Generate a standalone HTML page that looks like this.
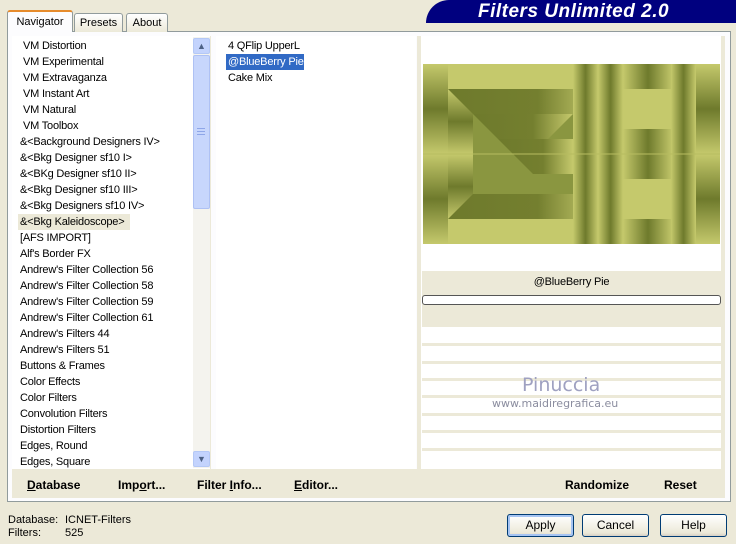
<!DOCTYPE html>
<html><head><style>
*{margin:0;padding:0;box-sizing:border-box}
body{width:736px;height:544px;background:#ece9d8;font-family:Tahoma,"Liberation Sans",sans-serif;font-size:11px;color:#000;position:relative;overflow:hidden}
.a{position:absolute}
.tab{position:absolute;border:1px solid #919b9c;border-bottom:none;background:linear-gradient(#fff,#ece9d8);text-align:center;border-radius:3px 3px 0 0}
.list div{height:16px;line-height:16px;white-space:nowrap;letter-spacing:-0.2px}
.b{font-weight:bold;font-size:12px;position:absolute;top:478px}
.btn{position:absolute;top:514px;height:23px;border:1px solid #003c74;border-radius:3px;background:linear-gradient(#fff,#ece9d8 85%,#d6d0c5);text-align:center;line-height:21px;font-size:12px}
.ln{position:absolute;left:422px;width:299px;height:3px;background:#ece9d8}
</style></head><body>
<div class="a" style="left:426px;top:0;width:310px;height:23px;background:#00007f;border-radius:40px 0 0 0"></div>
<div class="a" style="left:478px;top:1px;color:#fff;font:italic bold 19px 'Liberation Sans',sans-serif;letter-spacing:0.5px">Filters Unlimited 2.0</div>
<div class="a" style="left:7px;top:31px;width:724px;height:471px;border:1px solid #919b9c;background:#fcfcfe"></div>
<div class="tab" style="left:74px;top:13px;width:49px;height:19px;line-height:18px">Presets</div>
<div class="tab" style="left:126px;top:13px;width:42px;height:19px;line-height:18px">About</div>
<div class="tab" style="left:7px;top:10px;width:66px;height:22px;line-height:20px;background:#fcfcfe;border-top:2px solid #e68b2c">Navigator</div>
<div class="a" style="left:12px;top:36px;width:199px;height:433px;background:#fff;border-right:1px solid #ece9d8"></div>
<div class="a list" style="left:20px;top:38px">
<div style="padding-left:3px">VM Distortion</div><div style="padding-left:3px">VM Experimental</div><div style="padding-left:3px">VM Extravaganza</div><div style="padding-left:3px">VM Instant Art</div><div style="padding-left:3px">VM Natural</div><div style="padding-left:3px">VM Toolbox</div>
<div>&amp;&lt;Background Designers IV&gt;</div><div>&amp;&lt;Bkg Designer sf10 I&gt;</div><div>&amp;&lt;BKg Designer sf10 II&gt;</div><div>&amp;&lt;Bkg Designer sf10 III&gt;</div><div>&amp;&lt;Bkg Designers sf10 IV&gt;</div>
<div style="background:#ece9d8;margin-left:-2px;padding-left:2px;width:112px">&amp;&lt;Bkg Kaleidoscope&gt;</div>
<div>[AFS IMPORT]</div><div>Alf's Border FX</div><div>Andrew's Filter Collection 56</div><div>Andrew's Filter Collection 58</div><div>Andrew's Filter Collection 59</div><div>Andrew's Filter Collection 61</div><div>Andrew's Filters 44</div><div>Andrew's Filters 51</div><div>Buttons &amp; Frames</div><div>Color Effects</div><div>Color Filters</div><div>Convolution Filters</div><div>Distortion Filters</div><div>Edges, Round</div><div>Edges, Square</div>
</div>
<div class="a" style="left:193px;top:37px;width:17px;height:431px;background:#f4f3ee"></div>
<div class="a" style="left:193px;top:38px;width:17px;height:16px;background:#c3d3fd;border:1px solid #b4c8f6;border-radius:2px;text-align:center;font-size:9px;line-height:14px;color:#4d6185">&#9650;</div>
<div class="a" style="left:193px;top:55px;width:17px;height:154px;background:#c7d6fc;border:1px solid #aec1f4;border-radius:2px"></div>
<div class="a" style="left:197px;top:128px;width:8px;height:7px;border-top:1px solid #8ea6e8;border-bottom:1px solid #8ea6e8"><div style="margin-top:2px;border-top:1px solid #8ea6e8"></div></div>
<div class="a" style="left:193px;top:451px;width:17px;height:16px;background:#c3d3fd;border:1px solid #b4c8f6;border-radius:2px;text-align:center;font-size:9px;line-height:14px;color:#4d6185">&#9660;</div>
<div class="a" style="left:216px;top:36px;width:200px;height:433px;background:#fff"></div>
<div class="a list" style="left:226px;top:38px">
<div style="padding-left:2px">4 QFlip UpperL</div>
<div style="background:#316ac5;color:#fff;padding:0 2px;width:78px">@BlueBerry Pie</div>
<div style="padding-left:2px">Cake Mix</div>
</div>
<div class="a" style="left:417px;top:36px;width:4px;height:462px;background:#ece9d8"></div>
<div class="a" style="left:421px;top:36px;width:302px;height:433px;background:#fff"></div>
<div class="a" style="left:721px;top:36px;width:4px;height:462px;background:#ece9d8"></div>
<svg class="a" style="left:423px;top:64px" width="297" height="180" viewBox="0 0 297 180">
<defs>
<linearGradient id="v" x1="0" y1="0" x2="0" y2="1"><stop offset="0" stop-color="#c5c96c"/><stop offset=".5" stop-color="#6e7a2c"/><stop offset="1" stop-color="#c5c96c"/></linearGradient>
<linearGradient id="h" x1="0" y1="0" x2="1" y2="0"><stop offset="0" stop-color="#c5c96c"/><stop offset=".5" stop-color="#6e7a2c"/><stop offset="1" stop-color="#c5c96c"/></linearGradient>
<linearGradient id="hr" x1="0" y1="0" x2="1" y2="0"><stop offset="0" stop-color="#6e7a2c"/><stop offset=".6" stop-color="#747f2f"/><stop offset="1" stop-color="#c5c96c"/></linearGradient>
</defs>
<rect width="297" height="180" fill="#c5c96c"/>
<rect x="0" y="0" width="25" height="90" fill="url(#v)"/><rect x="0" y="90" width="25" height="90" fill="url(#v)"/>
<rect x="25" y="25" width="25" height="65" fill="url(#v)"/><rect x="25" y="90" width="25" height="65" fill="url(#v)"/>
<polygon points="25,25 175,25 150,50 50,50" fill="url(#hr)"/>
<polygon points="25,155 175,155 150,130 50,130" fill="url(#hr)"/>
<rect x="50" y="50" width="100" height="80" fill="#8a9640"/>
<polygon points="50,50 150,50 125,75 75,75" fill="url(#hr)"/>
<polygon points="75,75 150,75 150,110 110,110" fill="url(#hr)"/>
<rect x="150" y="0" width="25" height="180" fill="url(#h)"/>
<rect x="175" y="0" width="25" height="180" rx="3" fill="url(#h)"/>
<rect x="200" y="0" width="50" height="180" fill="url(#h)"/>
<rect x="200" y="25" width="48" height="40" fill="#c5c96c"/><rect x="200" y="115" width="48" height="40" fill="#c5c96c"/>
<rect x="248" y="0" width="25" height="180" fill="url(#h)"/>
<rect x="273" y="0" width="24" height="90" fill="url(#v)"/><rect x="273" y="90" width="24" height="90" fill="url(#v)"/>
<line x1="0" y1="90" x2="297" y2="90" stroke="#b7bc60" stroke-width="1"/>
</svg>
<div class="a" style="left:422px;top:271px;width:299px;height:56px;background:#ece9d8"></div>
<div class="a" style="left:422px;top:276px;width:299px;text-align:center;letter-spacing:-0.2px">@BlueBerry Pie</div>
<div class="a" style="left:422px;top:295px;width:299px;height:10px;background:#fff;border:1px solid #555;border-radius:3px"></div>
<div class="ln" style="top:343px"></div><div class="ln" style="top:361px"></div><div class="ln" style="top:378px"></div><div class="ln" style="top:395px"></div><div class="ln" style="top:413px"></div><div class="ln" style="top:430px"></div><div class="ln" style="top:448px"></div>
<div class="a" style="left:522px;top:374px;color:#9fa1c1;font:19px 'DejaVu Sans',sans-serif">Pinuccia</div>
<div class="a" style="left:492px;top:397px;color:#8b8d9f;font:11px 'DejaVu Sans',sans-serif">www.maidiregrafica.eu</div>
<div class="a" style="left:12px;top:469px;width:405px;height:29px;background:#ece9d8"></div>
<div class="a" style="left:421px;top:469px;width:302px;height:29px;background:#ece9d8"></div>
<div class="b" style="left:27px"><u>D</u>atabase</div>
<div class="b" style="left:118px">Imp<u>o</u>rt...</div>
<div class="b" style="left:197px">Filter <u>I</u>nfo...</div>
<div class="b" style="left:294px"><u>E</u>ditor...</div>
<div class="b" style="left:565px">Randomize</div>
<div class="b" style="left:664px">Reset</div>
<div class="a" style="left:8px;top:514px;line-height:13px">Database:<br>Filters:</div>
<div class="a" style="left:65px;top:514px;line-height:13px">ICNET-Filters<br>525</div>
<div class="btn" style="left:507px;width:67px;border-color:#003c74;box-shadow:inset 0 0 0 2px #a6c4f2">Apply</div>
<div class="btn" style="left:582px;width:67px">Cancel</div>
<div class="btn" style="left:660px;width:67px">Help</div>
</body></html>
